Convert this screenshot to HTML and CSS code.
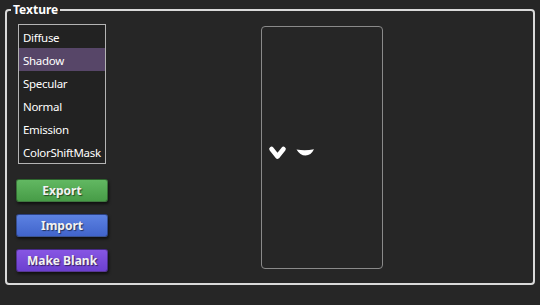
FILE: index.html
```html
<!DOCTYPE html>
<html>
<head>
<meta charset="utf-8">
<link rel="stylesheet" href="styles.css">
</head>
<body>
<div class="wrap">
  <fieldset class="group">
    <legend class="legend">Texture</legend>
    <div class="content">
      <div class="left">
        <ul class="list">
          <li class="item">Diffuse</li>
          <li class="item selected">Shadow</li>
          <li class="item">Specular</li>
          <li class="item">Normal</li>
          <li class="item">Emission</li>
          <li class="item">ColorShiftMask</li>
        </ul>
        <div class="buttons">
          <button class="btn green">Export</button>
          <button class="btn blue">Import</button>
          <button class="btn purple">Make Blank</button>
        </div>
      </div>
      <div class="preview">
        <svg class="marks" width="120" height="241" viewBox="0 0 120 241">
          <path d="M9.5 122 L15.5 129.5 L21.5 122" fill="none" stroke="#fff" stroke-width="4.6" stroke-linecap="round" stroke-linejoin="round"/>
          <path d="M34.5 122.5 Q43 124 52 122.3 Q49 128.5 43.5 128.5 Q38 128.5 34.5 122.5 Z" fill="#fff"/>
        </svg>
      </div>
    </div>
  </fieldset>
</div>
</body>
</html>
```

FILE: styles.css
```css
html, body {
  margin: 0;
  padding: 0;
  background: #262626;
  width: 540px;
  height: 305px;
  overflow: hidden;
  font-family: "Noto Sans", "Open Sans", sans-serif;
  color: #ffffff;
}

.wrap {
  padding: 3px 5px 0 5px;
}

.group {
  margin: 0;
  padding: 0;
  border: 2px solid #d9d9d9;
  border-radius: 4px;
  box-sizing: border-box;
  height: 282px;
}

.legend {
  margin-left: 4px;
  padding: 0 2px;
  font-size: 12px;
  line-height: 14px;
  font-weight: bold;
  color: #ffffff;
}

.content {
  display: flex;
  align-items: flex-start;
  padding-left: 9px;
}

.left {
  width: 92px;
  display: flex;
  flex-direction: column;
}

.list {
  list-style: none;
  margin: 7px 0 0 2px;
  padding: 0;
  width: 86px;
  border: 1px solid #b4b4b4;
  background: #222222;
}

.item {
  height: 23px;
  line-height: 23px;
  padding-top: 1px;
  box-sizing: border-box;
  padding-left: 4px;
  font-size: 11.5px;
  color: #ffffff;
  white-space: nowrap;
  letter-spacing: -0.3px;
}

.item.selected {
  background: #574668;
}

.buttons {
  display: flex;
  flex-direction: column;
  gap: 12px;
  margin-top: 15px;
}

.btn {
  width: 92px;
  height: 23px;
  padding: 0;
  border: 1px solid rgba(0,0,0,0.35);
  border-radius: 3px;
  font-family: "Noto Sans", "Open Sans", sans-serif;
  font-size: 12px;
  font-weight: bold;
  color: #f2f2f2;
  text-shadow: 1px 1px 1px rgba(0,0,0,0.55);
  box-shadow: 1px 2px 3px rgba(0,0,0,0.6);
}

.green {
  background: linear-gradient(#62b862, #479c47);
}

.blue {
  background: linear-gradient(#5c82e2, #4164cb);
}

.purple {
  background: linear-gradient(#8756e3, #6c40cf);
}

.preview {
  margin-left: 153px;
  margin-top: 9px;
  width: 120px;
  height: 241px;
  border: 1px solid #8a8a8a;
  border-radius: 4px;
}

.marks {
  display: block;
}
```
